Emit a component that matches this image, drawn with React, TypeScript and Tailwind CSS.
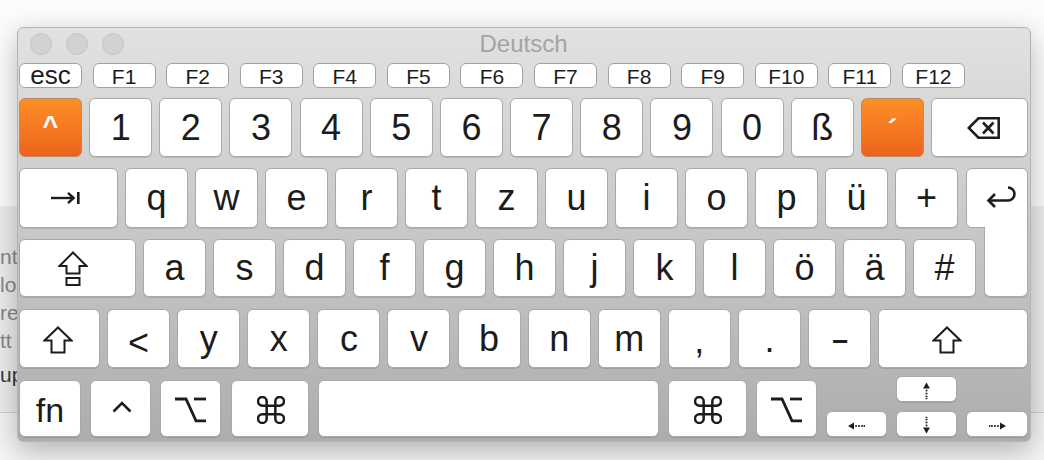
import React from "react";

const K = "#1c1c1c";

const keyBase =
  "flex items-center justify-center bg-white border border-[#a9a9a9] rounded-[6px] text-[#1c1c1c] shadow-[0_1px_0_rgba(0,0,0,0.12)] shrink-0";

function TabIcon() {
  return (
    <svg width="31" height="14" viewBox="0 0 31 14">
      <path d="M1 7H23.5" stroke={K} strokeWidth="2.4" />
      <path d="M18 1.8 L23.6 7 L18 12.2" fill="none" stroke={K} strokeWidth="2.4" />
      <rect x="27" y="1" width="2.6" height="12" fill={K} />
    </svg>
  );
}

function CapsIcon() {
  return (
    <svg width="30" height="36" viewBox="0 0 30 36">
      <path d="M15 1.5 L28.5 15 H21.5 V22.5 H8.5 V15 H1.5 Z" fill="none" stroke={K} strokeWidth="2" />
      <rect x="8.5" y="27" width="13" height="7" fill="none" stroke={K} strokeWidth="2" />
    </svg>
  );
}

function ShiftIcon() {
  return (
    <svg width="30" height="28" viewBox="0 0 30 28">
      <path d="M15 1.5 L28.5 14.5 H21.5 V26.5 H8.5 V14.5 H1.5 Z" fill="none" stroke={K} strokeWidth="2" />
    </svg>
  );
}

function ReturnIcon() {
  return (
    <svg width="31" height="22" viewBox="0 0 31 22">
      <path d="M23 1.5 A6.5 6.5 0 0 1 23 14.5 H4" fill="none" stroke={K} strokeWidth="2.6" />
      <path d="M10 8 L3.5 14.5 L10 21" fill="none" stroke={K} strokeWidth="2.6" />
    </svg>
  );
}

function BackspaceIcon() {
  return (
    <svg width="33" height="22" viewBox="0 0 33 22">
      <path d="M1.8 11 L11.5 1.3 H31.7 V20.7 H11.5 Z" fill="none" stroke={K} strokeWidth="2.5" />
      <path d="M16 5.5 L26.5 16.5 M26.5 5.5 L16 16.5" stroke={K} strokeWidth="2.6" />
    </svg>
  );
}

function OptionIcon() {
  return (
    <svg width="31" height="26" viewBox="0 0 31 26">
      <path d="M0 2 H11 L21 23.8 H31" fill="none" stroke={K} strokeWidth="2.8" />
      <path d="M19 2 H31" stroke={K} strokeWidth="2.8" />
    </svg>
  );
}

function CommandIcon() {
  return (
    <svg width="28" height="28" viewBox="2.3 2.3 19.4 19.4">
      <path
        d="M15 6v12a3 3 0 1 0 3-3H6a3 3 0 1 0 3 3V6a3 3 0 1 0-3 3h12a3 3 0 1 0-3-3"
        fill="none"
        stroke={K}
        strokeWidth="1.75"
      />
    </svg>
  );
}

function CtrlIcon() {
  return (
    <svg width="20" height="13" viewBox="0 0 20 13">
      <path d="M1.5 11.5 L10 3 L18.5 11.5" fill="none" stroke={K} strokeWidth="2.6" />
    </svg>
  );
}

function DottedArrow({ className }: { className: string }) {
  return (
    <svg width="17" height="8" viewBox="0 0 17 8" className={className}>
      <path d="M0 4 L6 0.6 V7.4 Z" fill={K} />
      <rect x="7.2" y="3.1" width="1.7" height="1.8" fill={K} />
      <rect x="10.2" y="3.1" width="1.7" height="1.8" fill={K} />
      <rect x="13.2" y="3.1" width="1.7" height="1.8" fill={K} />
      <rect x="15.6" y="3.1" width="1.4" height="1.8" fill={K} />
    </svg>
  );
}

function CharKey({ label }: { label: string }) {
  return <div className={`${keyBase} w-[63px] h-full text-[36px] leading-none`}>{label}</div>;
}

function FKey({ label, big }: { label: string; big?: boolean }) {
  return (
    <div
      className={`flex items-center justify-center bg-white border border-[#a2a2a2] rounded-[6px] text-[#1c1c1c] w-[63px] h-full leading-none ${
        big ? "text-[26px] pb-[2px]" : "text-[21px] pt-[2px]"
      }`}
    >
      {label}
    </div>
  );
}

function OrangeKey({ label, small }: { label: string; small?: boolean }) {
  return (
    <div
      className={`flex items-start justify-center w-[63px] h-full rounded-[6px] border border-[#b98a66] bg-linear-to-b from-[#fd8f27] to-[#ec631d] text-white font-bold leading-none shrink-0 ${
        small ? "text-[30px] pt-[16px]" : "text-[27px] pt-[14px]"
      }`}
    >
      {label}
    </div>
  );
}

export default function App() {
  const fkeys = ["F1", "F2", "F3", "F4", "F5", "F6", "F7", "F8", "F9", "F10", "F11", "F12"];
  const nums = ["1", "2", "3", "4", "5", "6", "7", "8", "9", "0", "ß"];
  const row2 = ["q", "w", "e", "r", "t", "z", "u", "i", "o", "p", "ü", "+"];
  const row3 = ["a", "s", "d", "f", "g", "h", "j", "k", "l", "ö", "ä", "#"];
  const row4 = ["y", "x", "c", "v", "b", "n", "m"];

  return (
    <div className="relative w-[1044px] h-[460px] overflow-hidden flex flex-col bg-[#f6f6f6] font-['Liberation_Sans',Arial,sans-serif]">
      {/* desktop behind */}
      <div className="h-[206px] bg-[#fcfcfc]" />
      <div className="h-[207px] bg-[#ececec] border-b border-[#cdcdcd] pt-[37px] text-[21px] leading-[28px] text-[#878787]">
        <div>nt</div>
        <div>lo</div>
        <div>re</div>
        <div>tt</div>
        <div className="mt-[6px] text-[#3a3a3a]">up</div>
      </div>
      <div className="flex-1 bg-[#f4f4f4]" />

      {/* keyboard viewer window */}
      <div className="absolute left-[17px] top-[27px] w-[1014px] h-[415px] rounded-[6px] border border-[#b4b4b4] bg-linear-to-b from-[#e2e2e2] to-[#adadad] shadow-[0_8px_28px_rgba(0,0,0,0.28)] flex flex-col pl-[1px] pr-[2px]">
        {/* title bar */}
        <div className="grid grid-cols-[1fr_auto_1fr] items-center h-[32px]">
          <div className="flex items-center gap-[14px] pl-[11px]">
            <div className="w-[22px] h-[22px] rounded-full bg-[#d2d2d2] border border-[#c4c4c4]" />
            <div className="w-[22px] h-[22px] rounded-full bg-[#d2d2d2] border border-[#c4c4c4]" />
            <div className="w-[22px] h-[22px] rounded-full bg-[#d2d2d2] border border-[#c4c4c4]" />
          </div>
          <div className="text-[24px] leading-none text-[#a4a4a4]">Deutsch</div>
          <div />
        </div>

        {/* F row */}
        <div className="flex h-[25px] mt-[3px] gap-[10.58px]">
          <FKey label="esc" big />
          {fkeys.map((f) => (
            <FKey key={f} label={f} />
          ))}
        </div>

        {/* number row */}
        <div className="flex h-[59px] mt-[10px] gap-[7.17px]">
          <OrangeKey label="^" />
          {nums.map((n) => (
            <CharKey key={n} label={n} />
          ))}
          <OrangeKey label="´" small />
          <div className={`${keyBase} flex-1 h-full pl-[7px]`}>
            <BackspaceIcon />
          </div>
        </div>

        {/* row 2 */}
        <div className="flex h-[60px] mt-[11px] gap-[7px]">
          <div className={`${keyBase} w-[99px] h-full pr-[6px]`}>
            <TabIcon />
          </div>
          {row2.map((c) => (
            <CharKey key={c} label={c} />
          ))}
          <div className="flex-1 ml-[1px] h-full flex items-center justify-center bg-white border border-[#a9a9a9] rounded-[6px] rounded-br-none pl-[7px] pb-[2px]">
            <ReturnIcon />
          </div>
        </div>

        {/* row 3 */}
        <div className="flex h-[58px] mt-[11px] gap-[7px]">
          <div className={`${keyBase} w-[117px] h-full pr-[10px] pt-[2px]`}>
            <CapsIcon />
          </div>
          {row3.map((c) => (
            <CharKey key={c} label={c} />
          ))}
          <div className="ml-auto w-[44px] h-[70px] -mt-[12px] self-start bg-white border border-[#a9a9a9] border-t-0 rounded-b-[6px] shadow-[0_1px_0_rgba(0,0,0,0.12)]" />
        </div>

        {/* row 4 */}
        <div className="flex h-[59px] mt-[12px] gap-[7.1px]">
          <div className={`${keyBase} w-[81px] h-full pr-[4px] pt-[2px]`}>
            <ShiftIcon />
          </div>
          <div className={`${keyBase} w-[63px] h-full text-[36px] leading-none pt-[8px]`}>&lt;</div>
          {row4.map((c) => (
            <CharKey key={c} label={c} />
          ))}
          <div className={`${keyBase} w-[63px] h-full text-[36px] leading-none pt-[4px]`}>,</div>
          <div className={`${keyBase} w-[63px] h-full text-[36px] leading-none pt-[2px]`}>.</div>
          <div className={`${keyBase} w-[63px] h-full text-[36px] leading-none`}>
            <span className="inline-block scale-x-[1.6]">-</span>
          </div>
          <div className={`${keyBase} flex-1 h-full pr-[12px] pt-[2px]`}>
            <ShiftIcon />
          </div>
        </div>

        {/* row 5 */}
        <div className="flex h-[57px] mt-[12px] gap-[9px]">
          <div className={`${keyBase} w-[62px] h-full text-[34px] leading-none pt-[2px]`}>fn</div>
          <div className={`${keyBase} w-[61px] h-full pb-[4px] pl-[2px]`}>
            <CtrlIcon />
          </div>
          <div className={`${keyBase} w-[61px] h-full pt-[3px]`}>
            <OptionIcon />
          </div>
          <div className={`${keyBase} w-[78px] h-full ml-[1px] pt-[3px] pl-[2px]`}>
            <CommandIcon />
          </div>
          <div className={`${keyBase} w-[341px] h-full`} />
          <div className={`${keyBase} w-[79px] h-full pt-[3px]`}>
            <CommandIcon />
          </div>
          <div className={`${keyBase} w-[61px] h-full pt-[3px]`}>
            <OptionIcon />
          </div>
          <div className={`${keyBase} w-[61px] h-[26px] self-end pt-[4px]`}>
            <DottedArrow className="" />
          </div>
          <div className="w-[61px] h-[61px] -mt-[4px] flex flex-col justify-between shrink-0">
            <div className={`${keyBase} w-full h-[26px] pt-[3px]`}>
              <DottedArrow className="rotate-90" />
            </div>
            <div className={`${keyBase} w-full h-[26px] pt-[1px]`}>
              <DottedArrow className="-rotate-90" />
            </div>
          </div>
          <div className={`${keyBase} flex-1 h-[26px] self-end pt-[4px]`}>
            <DottedArrow className="rotate-180" />
          </div>
        </div>
      </div>
    </div>
  );
}
